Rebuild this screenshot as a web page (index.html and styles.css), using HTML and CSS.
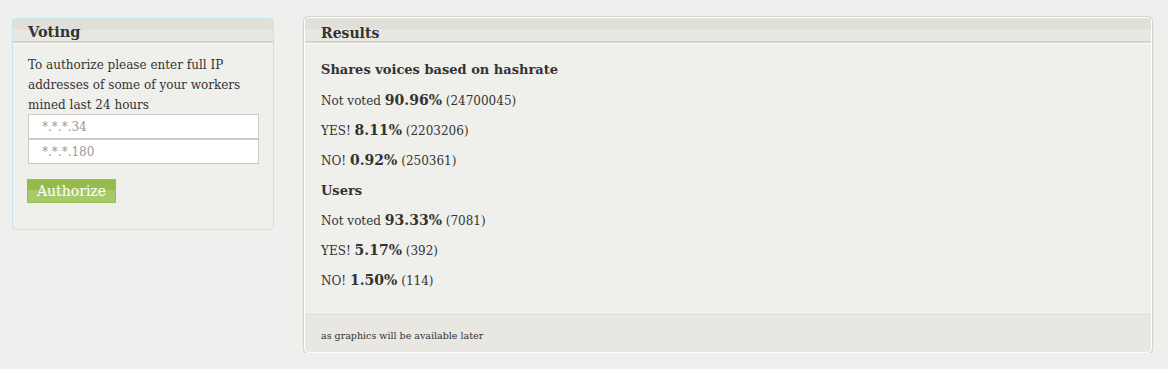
FILE: index.html
```html
<!DOCTYPE html>
<html>
<head>
<meta charset="utf-8">
<link rel="stylesheet" href="styles.css">
</head>
<body>
<div class="page">
  <div class="box voting">
    <div class="box-head"><h2>Voting</h2></div>
    <div class="box-body">
      <p class="intro">To authorize please enter full IP addresses of some of your workers mined last 24 hours</p>
      <input class="ip" type="text" placeholder="*.*.*.34">
      <input class="ip" type="text" placeholder="*.*.*.180">
      <button class="btn">Authorize</button>
    </div>
  </div>
  <div class="box results">
    <div class="box-head"><h2>Results</h2></div>
    <div class="box-body">
      <p class="sub first">Shares voices based on hashrate</p>
      <p>Not voted <b>90.96%</b> (24700045)</p>
      <p>YES! <b>8.11%</b> (2203206)</p>
      <p>NO! <b>0.92%</b> (250361)</p>
      <p class="sub">Users</p>
      <p>Not voted <b>93.33%</b> (7081)</p>
      <p>YES! <b>5.17%</b> (392)</p>
      <p>NO! <b>1.50%</b> (114)</p>
    </div>
    <div class="box-foot">as graphics will be available later</div>
  </div>
</div>
</body>
</html>
```
FILE: styles.css
```css
html, body {
  margin: 0;
  background: #efefed;
  font-family: Georgia, "DejaVu Serif", serif;
  color: #333;
}
.page {
  display: flex;
  align-items: flex-start;
  gap: 30px;
  padding: 17px 0 0 12px;
}
.box {
  background: #efefeb;
  border-radius: 4px;
  overflow: hidden;
}
.voting {
  width: 260px;
  margin-top: 1px;
  border: 1px solid #bfe7ef;
}
.results {
  width: 846px;
  border: 1px solid #fff;
  box-shadow: 0 0 1px 1px #cfcfca;
  display: flex;
  flex-direction: column;
  height: 334px;
}
.box-head {
  background: linear-gradient(#e1e0d8 0, #e1e0d8 50%, #e8e7e1 50%, #e8e7e1 100%);
  border-bottom: 2px solid #d4d3cc;
  box-shadow: 0 1px 0 #fff;
  height: 22px;
}
.results .box-head { height: 23px; }
.box-head h2 {
  margin: 0;
  padding: 4px 0 0 15px;
  font-size: 14.5px;
  line-height: 18px;
  font-weight: bold;
  color: #333;
}
.results .box-head h2 { padding-left: 16px; padding-top: 6px; font-size: 14px; }
.voting .box-body {
  padding: 12px 15px 26px 15px;
  display: flex;
  flex-direction: column;
  align-items: flex-start;
}
.intro {
  margin: 0 0 -1px 0;
  font-size: 12px;
  line-height: 20px;
  color: #333;
}
.ip {
  box-sizing: border-box;
  width: 231px;
  height: 25px;
  margin: 0;
  border: 1px solid #cbcbcb;
  background: #fff;
  font-family: inherit;
  font-size: 12px;
  padding: 0 13px;
  outline: none;
}
.ip::placeholder { color: #999; }
.btn {
  margin-top: 15px;
  margin-left: -1px;
  box-sizing: border-box;
  width: 89px;
  height: 24px;
  border: 1px solid #97bc52;
  background: linear-gradient(#95bb4c 0, #95bb4c 45%, #a6c96a 45%, #a6c96a 100%);
  color: #fff;
  font-family: inherit;
  font-size: 14px;
  padding: 0;
  line-height: 20px;
}
.results .box-body {
  flex: 1;
  padding: 17px 16px 0 16px;
}
.results p {
  margin: 0 0 10px 0;
  height: 20px;
  font-size: 12px;
  line-height: 20px;
}
.results p.sub {
  font-weight: bold;
  font-size: 13px;
}
.results p.sub.first { margin-bottom: 11px; }
.results b { font-size: 14px; line-height: 1; }
.box-foot {
  height: 37px;
  background: #e8e7e2;
  border-top: 1px solid #dcdcd5;
  font-size: 9.5px;
  line-height: 42px;
  padding-left: 16px;
  color: #333;
}
```
